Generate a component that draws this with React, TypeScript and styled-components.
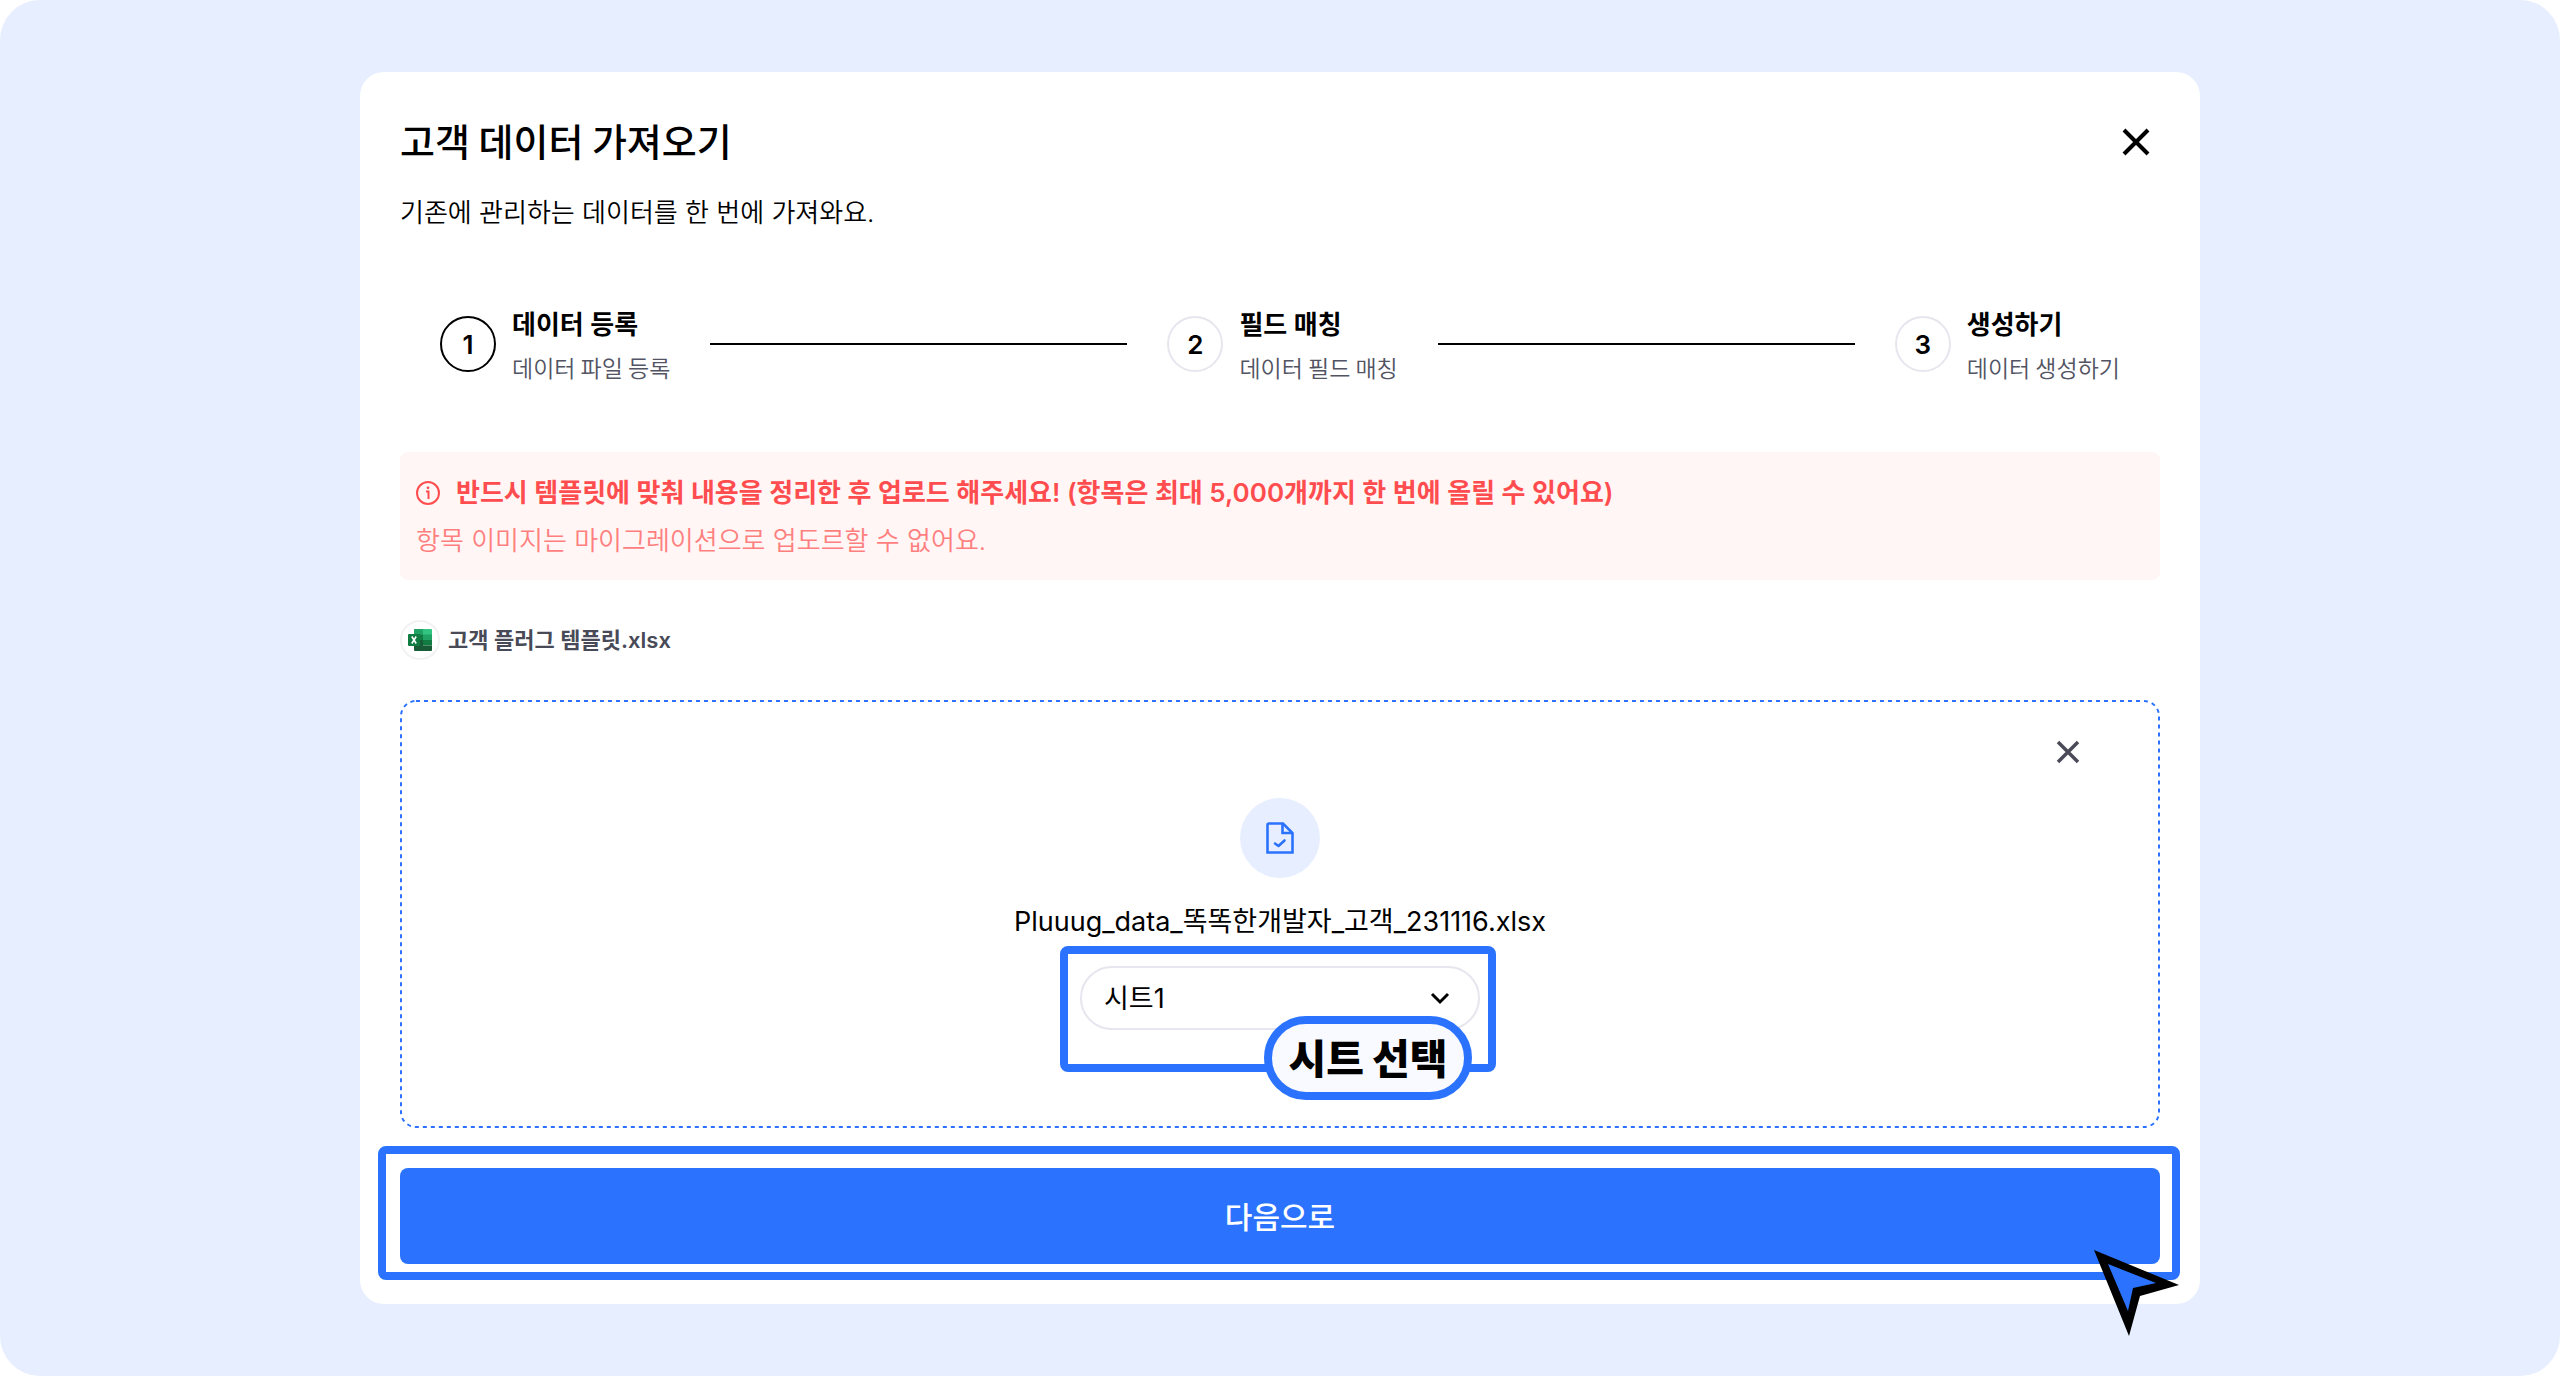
import React, { useState } from "react";
import styled, { createGlobalStyle } from "styled-components";

const blue = "#2b73ff";
const pale = "#e7eeff";
const hangulFirst = `"Noto Sans CJK KR", Inter, sans-serif`;

const GlobalStyle = createGlobalStyle`
  *, *::before, *::after { box-sizing: border-box; }
  body {
    margin: 0;
    background: #fff;
    color: #000;
    font-family: Inter, "Noto Sans CJK KR", sans-serif;
    font-weight: 350;
  }
  h1, h2, p, ol { margin: 0; padding: 0; }
  button, select { font-family: inherit; font-weight: inherit; color: inherit; }
`;

const Page = styled.main`
  min-height: 100vh;
  padding: 72px 40px;
  display: flex;
  justify-content: center;
  align-items: flex-start;
  background: ${pale};
  border-radius: 40px;
`;

const Card = styled.section`
  width: 100%;
  max-width: 1840px;
  padding: 46px 40px 40px;
  display: flex;
  flex-direction: column;
  gap: 40px;
  background: #fff;
  border-radius: 24px;
`;

const Header = styled.header`
  display: flex;
  justify-content: space-between;
  align-items: flex-start;
`;

const Heading = styled.div`
  display: flex;
  flex-direction: column;
  gap: 31px;
`;

const Title = styled.h1`
  font-family: ${hangulFirst};
  font-size: 38px;
  line-height: 44px;
  font-weight: 500;
`;

const Subtitle = styled.p`
  font-size: 26px;
  line-height: 40px;
`;

const IconButton = styled.button`
  width: 48px;
  height: 48px;
  padding: 0;
  display: grid;
  place-items: center;
  border: 0;
  background: none;
  cursor: pointer;
`;

const Steps = styled.ol`
  margin: 32px 0 29px;
  padding: 0 40px;
  display: flex;
  align-items: center;
  gap: 40px;
  list-style: none;
`;

const Step = styled.li`
  flex: none;
  display: flex;
  align-items: center;
  gap: 16px;
`;

const Connector = styled.li`
  flex: 1;
  height: 2px;
  background: #000;
`;

const StepNumber = styled.span<{ $active: boolean }>`
  flex: none;
  width: 56px;
  height: 56px;
  display: grid;
  place-items: center;
  border: 2px solid ${(p) => (p.$active ? "#000" : "#e6e6ee")};
  border-radius: 50%;
  font-size: 26px;
  font-weight: 600;
`;

const StepText = styled.div`
  display: flex;
  flex-direction: column;
  gap: 6px;
  white-space: nowrap;
`;

const StepTitle = styled.h2`
  font-size: 26px;
  line-height: 40px;
  font-weight: 600;
`;

const StepHint = styled.p`
  font-family: ${hangulFirst};
  font-size: 23px;
  line-height: 32px;
  color: #525463;
`;

const Notice = styled.div`
  padding: 21px 16px 19px;
  display: flex;
  flex-direction: column;
  gap: 8px;
  background: #fff6f5;
  border-radius: 8px;
  font-size: 26px;
  line-height: 40px;
  color: #ff7f7f;
`;

const NoticeTitle = styled.p`
  display: flex;
  align-items: center;
  gap: 16px;
  font-weight: 600;
  color: #ff4d4f;
`;

const TemplateLink = styled.a`
  align-self: flex-start;
  display: flex;
  align-items: center;
  gap: 8px;
  font-size: 22px;
  line-height: 40px;
  font-weight: 600;
  color: #484a57;
  text-decoration: none;
`;

const TemplateBadge = styled.span`
  width: 40px;
  height: 40px;
  display: grid;
  place-items: center;
  border: 2px solid #f2f2f4;
  border-radius: 50%;
`;

const Dropzone = styled.div`
  position: relative;
  padding: 98px 68px;
  display: flex;
  flex-direction: column;
  align-items: center;
  gap: 24px;
`;

const DashedOutline = styled.svg`
  position: absolute;
  inset: 1px;
  width: calc(100% - 2px);
  height: calc(100% - 2px);
  overflow: visible;
  pointer-events: none;
`;

const RemoveFile = styled(IconButton)`
  position: absolute;
  top: 28px;
  right: 68px;
`;

const FileBadge = styled.span`
  width: 80px;
  height: 80px;
  display: grid;
  place-items: center;
  background: ${pale};
  border-radius: 50%;
`;

const FileName = styled.p`
  font-size: 27px;
  line-height: 40px;
  font-weight: 400;
`;

const SheetField = styled.div`
  position: relative;
  width: 400px;
`;

const SheetSelect = styled.select`
  display: block;
  width: 100%;
  height: 64px;
  padding: 0 22px;
  appearance: none;
  border: 2px solid #e6e6ee;
  border-radius: 32px;
  background: #fff;
  font-size: 27px;
  font-weight: 400;
`;

const Chevron = styled.svg`
  position: absolute;
  top: 20px;
  right: 28px;
  pointer-events: none;
`;

const Highlight = styled.div<{ $inset: string }>`
  position: absolute;
  inset: ${(p) => p.$inset};
  border: 8px solid ${blue};
  border-radius: 8px;
  pointer-events: none;
`;

const Callout = styled.label`
  position: absolute;
  top: 50px;
  right: 8px;
  width: 208px;
  height: 84px;
  padding-top: 2px;
  display: grid;
  place-items: center;
  border: 8px solid ${blue};
  border-radius: 42px;
  background: #f9faff;
  font-size: 41px;
  line-height: 60px;
  font-weight: 900;
  white-space: nowrap;
`;

const Footer = styled.footer`
  position: relative;
`;

const NextButton = styled.button`
  display: block;
  width: 100%;
  height: 96px;
  padding: 0 0 2px;
  border: 0;
  border-radius: 8px;
  background: ${blue};
  color: #fff;
  font-size: 30px;
  font-weight: 500;
  cursor: pointer;
`;

const Pointer = styled.svg`
  position: absolute;
  top: 80px;
  right: -22px;
  pointer-events: none;
`;

const steps = [
  { title: "데이터 등록", hint: "데이터 파일 등록" },
  { title: "필드 매칭", hint: "데이터 필드 매칭" },
  { title: "생성하기", hint: "데이터 생성하기" },
];

function ExcelIcon() {
  return (
    <svg width="24" height="22" viewBox="0 0 24 22" aria-hidden="true">
      <path d="M6 0h9v6H6z" fill="#21a366" />
      <path d="M15 0h8a1 1 0 0 1 1 1v5h-9z" fill="#33c481" />
      <path d="M6 5.500h9V11H6z" fill="#107c41" />
      <path d="M15 5.500h9V11h-9z" fill="#21a366" />
      <path d="M6 11h9v6H6z" fill="#185c37" />
      <path d="M15 11h9v5.500h-9z" fill="#107c41" />
      <path d="M6 16.500h18V21a1 1 0 0 1-1 1H7a1 1 0 0 1-1-1z" fill="#185c37" />
      <rect y="5" width="12" height="12" rx="1" fill="#107c41" />
      <path d="M3.800 7.500 8.200 14.500M8.200 7.500 3.800 14.500" stroke="#fff" strokeWidth="1.600" />
    </svg>
  );
}

export default function App() {
  const [sheet, setSheet] = useState("시트1");
  return (
    <>
      <GlobalStyle />
      <Page>
        <Card>
          <Header>
            <Heading>
              <Title>고객 데이터 가져오기</Title>
              <Subtitle>기존에 관리하는 데이터를 한 번에 가져와요.</Subtitle>
            </Heading>
            <IconButton type="button" aria-label="닫기">
              <svg width="28" height="28" viewBox="0 0 28 28" aria-hidden="true">
                <path d="M2 2 26 26M26 2 2 26" stroke="#000" strokeWidth="4" />
              </svg>
            </IconButton>
          </Header>

          <Steps>
            {steps.map((step, i) => (
              <React.Fragment key={step.title}>
                {i > 0 && <Connector aria-hidden="true" />}
                <Step>
                  <StepNumber $active={i === 0}>{i + 1}</StepNumber>
                  <StepText>
                    <StepTitle>{step.title}</StepTitle>
                    <StepHint>{step.hint}</StepHint>
                  </StepText>
                </Step>
              </React.Fragment>
            ))}
          </Steps>

          <Notice role="note">
            <NoticeTitle>
              <svg width="24" height="24" viewBox="0 0 24 24" fill="none" aria-hidden="true">
                <circle cx="12" cy="12" r="11" stroke="#ff4d4f" strokeWidth="2" />
                <path d="M10 10.500h2.500V18" stroke="#ff4d4f" strokeWidth="2" />
                <circle cx="12" cy="6.800" r="1.400" fill="#ff4d4f" />
              </svg>
              반드시 템플릿에 맞춰 내용을 정리한 후 업로드 해주세요! (항목은 최대 5,000개까지 한 번에 올릴 수 있어요)
            </NoticeTitle>
            <p>항목 이미지는 마이그레이션으로 업도르할 수 없어요.</p>
          </Notice>

          <TemplateLink href="#template">
            <TemplateBadge>
              <ExcelIcon />
            </TemplateBadge>
            고객 플러그 템플릿.xlsx
          </TemplateLink>

          <Dropzone>
            <DashedOutline aria-hidden="true">
              <rect width="100%" height="100%" rx="15" fill="none" stroke={blue} strokeWidth="2" strokeDasharray="4 4" />
            </DashedOutline>
            <RemoveFile type="button" aria-label="파일 삭제">
              <svg width="24" height="24" viewBox="0 0 24 24" aria-hidden="true">
                <path d="M2 2 22 22M22 2 2 22" stroke="#4a4b57" strokeWidth="3.500" />
              </svg>
            </RemoveFile>
            <FileBadge>
              <svg width="28" height="32" viewBox="0 0 28 32" fill="none" stroke={blue} strokeWidth="2.600" aria-hidden="true">
                <path d="M3 1.500H17L26.500 11V30.500H1.500V3Q1.500 1.500 3 1.500Z" />
                <path d="M16.500 2V11H26" />
                <path d="M9 21.500 12.500 24 18.500 18.500" strokeLinecap="round" strokeLinejoin="round" />
              </svg>
            </FileBadge>
            <FileName>Pluuug_data_똑똑한개발자_고객_231116.xlsx</FileName>
            <SheetField>
              <SheetSelect id="sheet" value={sheet} onChange={(e) => setSheet(e.target.value)}>
                <option>시트1</option>
              </SheetSelect>
              <Chevron width="24" height="24" viewBox="0 0 24 24" fill="none" aria-hidden="true">
                <path d="M4 8 12 16 20 8" stroke="#000" strokeWidth="3" />
              </Chevron>
              <Highlight $inset="-20px -16px -42px -20px" />
              <Callout htmlFor="sheet">시트 선택</Callout>
            </SheetField>
          </Dropzone>

          <Footer>
            <NextButton type="button">다음으로</NextButton>
            <Highlight $inset="-22px -20px -16px -22px" />
            <Pointer width="90" height="90" viewBox="0 0 90 90" aria-hidden="true">
              <path d="M2 2 87 37 48 48 37 88Z" fill="#000" />
              <path d="M16 16 64 35 41 40 36 63Z" fill={blue} />
            </Pointer>
          </Footer>
        </Card>
      </Page>
    </>
  );
}
